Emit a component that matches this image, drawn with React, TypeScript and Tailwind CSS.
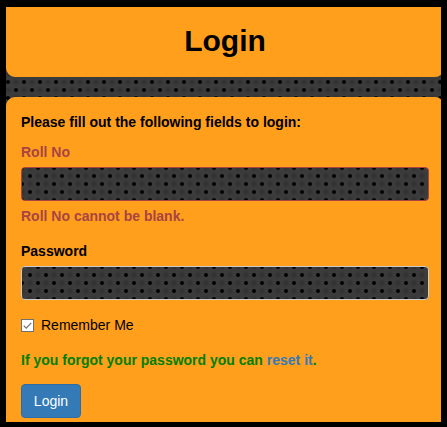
const dots =
  "bg-[#3b3b3b] bg-[radial-gradient(circle_at_8px_8px,#000_1.4px,transparent_2.5px),radial-gradient(circle_at_0px_0px,#000_1.4px,transparent_2.5px),radial-gradient(circle_at_16px_0px,#000_1.4px,transparent_2.5px),radial-gradient(circle_at_0px_16px,#000_1.4px,transparent_2.5px),radial-gradient(circle_at_16px_16px,#000_1.4px,transparent_2.5px),radial-gradient(circle_at_8px_0px,#323232_1px,transparent_4px),radial-gradient(circle_at_8px_16px,#323232_1px,transparent_4px),radial-gradient(circle_at_0px_8px,#323232_1px,transparent_4px),radial-gradient(circle_at_16px_8px,#323232_1px,transparent_4px)] bg-[length:16px_16px]";

export default function App() {
  return (
    <div className="h-[427px] w-[447px] overflow-hidden bg-black pt-[7px] pl-[6px] font-['Liberation_Sans',Arial,sans-serif] text-[14px] leading-5 text-black">
      <div className={`h-[415px] w-[435px] overflow-hidden bg-position-[2px_11px] ${dots}`}>
        <header className="h-[70px] w-[438px] rounded-b-[9px] bg-[#ff9f1c] pt-4">
          <h1 className="text-center text-[30px] leading-[35px] font-bold">Login</h1>
        </header>
        <main className="mt-5 h-[325px] w-[438px] rounded-t-[9px] bg-[#ff9f1c] px-[15px] pt-[15px]">
          <p className="font-bold">Please fill out the following fields to login:</p>
          <form className="w-[408px]" onSubmit={(e) => e.preventDefault()}>
            <label htmlFor="roll" className="mt-[10px] block font-bold text-[#a94442]">Roll No</label>
            <input id="roll" className={`mt-[5px] block h-[34px] w-full rounded-[4px] border border-[#a94442] bg-origin-padding px-3 text-white outline-none ${dots}`} />
            <p className="mt-[5px] font-bold text-[#a94442]">Roll No cannot be blank.</p>
            <label htmlFor="password" className="mt-[15px] block font-bold">Password</label>
            <input id="password" type="password" className={`mt-[5px] block h-[34px] w-full rounded-[4px] border border-[#ccc] bg-origin-padding px-3 text-white outline-none ${dots}`} />
            <div className="mt-[15px] flex items-center">
              <svg className="mr-[7px] h-[13px] w-[13px]" viewBox="0 0 13 13" fill="none">
                <rect x=".5" y=".5" width="12" height="12" fill="white" stroke="#707070" />
                <path d="M2.7 6.6 5.2 9.1 10.3 3.8" stroke="#707070" strokeWidth="1.2" />
              </svg>
              <span>Remember Me</span>
            </div>
            <p className="mt-[15px] font-bold text-[#008000]">
              If you forgot your password you can <a className="text-[#337ab7]">reset it</a>.
            </p>
            <button type="submit" className="mt-[14px] h-[34px] w-[60px] rounded-[4px] border border-[#2e6da4] bg-[#337ab7] text-white">Login</button>
          </form>
        </main>
      </div>
    </div>
  );
}
